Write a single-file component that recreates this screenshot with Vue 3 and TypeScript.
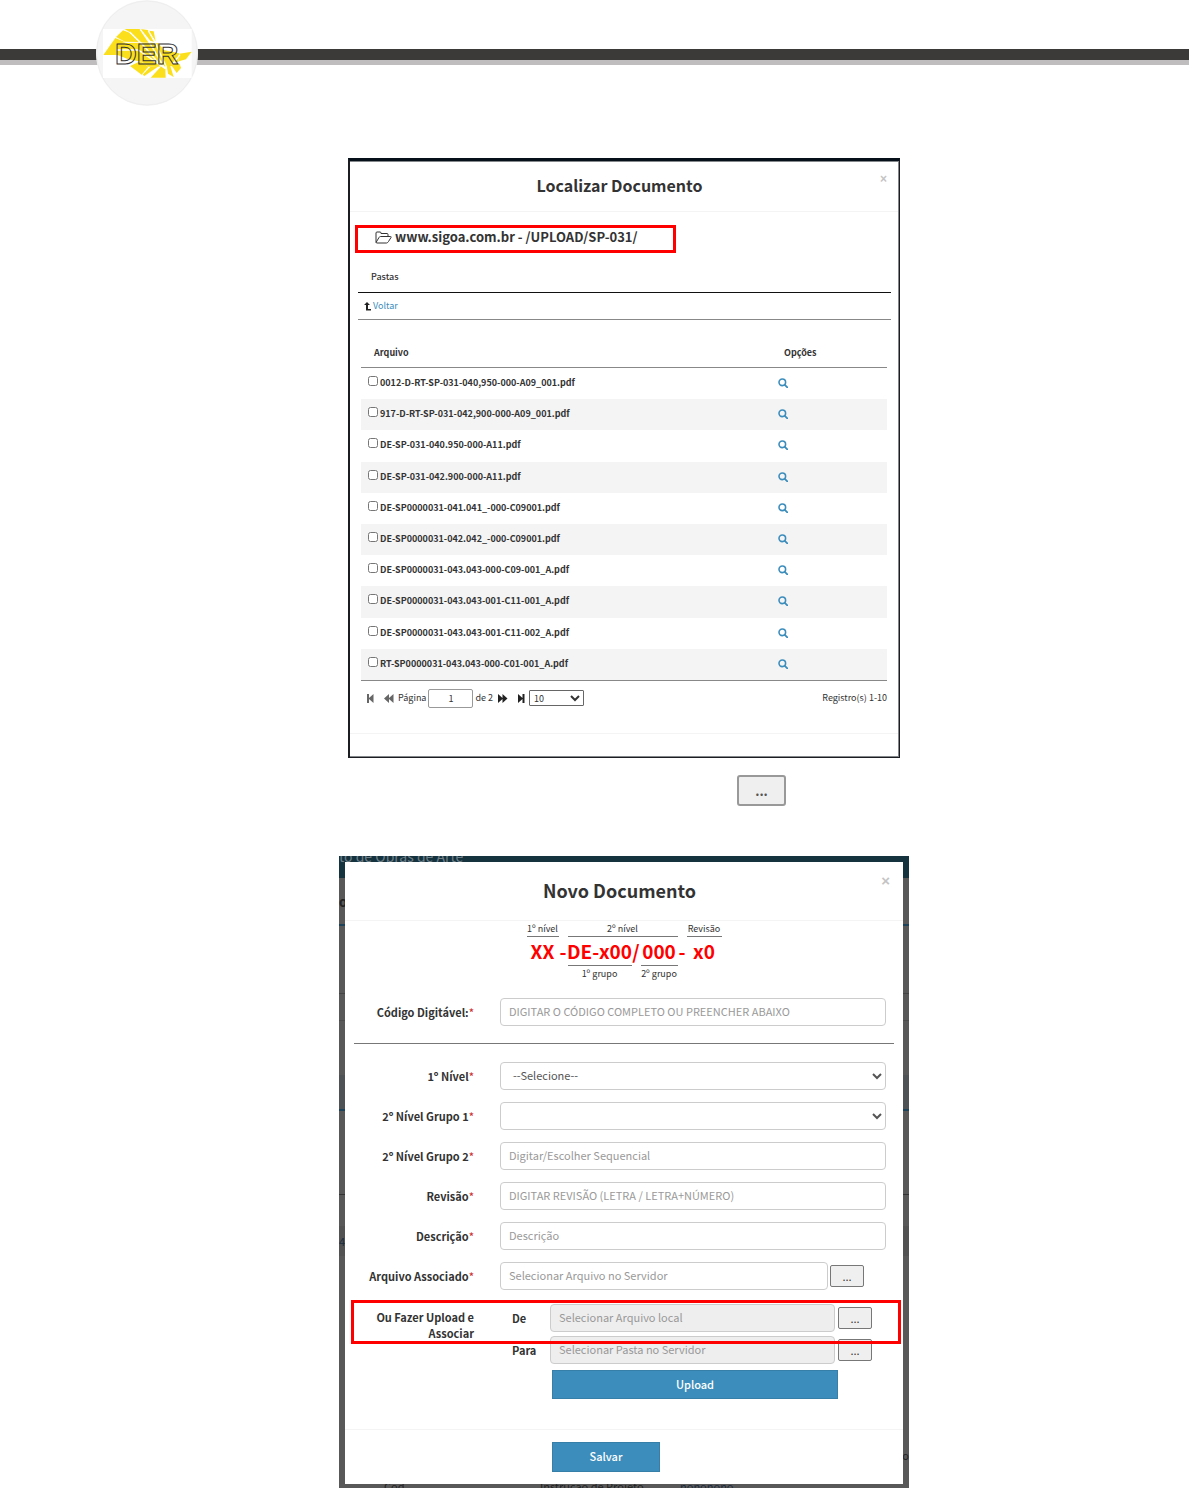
<script setup lang="ts">
import { ref } from 'vue'

interface Field {
  id: string
  label: string
  kind: 'select' | 'text' | 'file'
  hint: string
}

const files: string[] = [
  '0012-D-RT-SP-031-040,950-000-A09_001.pdf',
  '917-D-RT-SP-031-042,900-000-A09_001.pdf',
  'DE-SP-031-040.950-000-A11.pdf',
  'DE-SP-031-042.900-000-A11.pdf',
  'DE-SP0000031-041.041_-000-C09001.pdf',
  'DE-SP0000031-042.042_-000-C09001.pdf',
  'DE-SP0000031-043.043-000-C09-001_A.pdf',
  'DE-SP0000031-043.043-001-C11-001_A.pdf',
  'DE-SP0000031-043.043-001-C11-002_A.pdf',
  'RT-SP0000031-043.043-000-C01-001_A.pdf',
]

const fields: Field[] = [
  { id: 'nivel1', label: '1º Nível', kind: 'select', hint: '--Selecione--' },
  { id: 'nivel2g1', label: '2º Nível Grupo 1', kind: 'select', hint: '' },
  { id: 'nivel2g2', label: '2º Nível Grupo 2', kind: 'text', hint: 'Digitar/Escolher Sequencial' },
  { id: 'revisao', label: 'Revisão', kind: 'text', hint: 'DIGITAR REVISÃO (LETRA / LETRA+NÚMERO)' },
  { id: 'descricao', label: 'Descrição', kind: 'text', hint: 'Descrição' },
  { id: 'arquivo', label: 'Arquivo Associado', kind: 'file', hint: 'Selecionar Arquivo no Servidor' },
]

const selected = ref<string[]>([])
const page = ref('1')
</script>

<template>
  <div class="page">
    <header class="banner">
      <div class="stripe"></div>
      <svg class="logo" viewBox="0 0 312 318" role="img" aria-label="DER">
        <ellipse cx="156" cy="159" rx="153" ry="158" fill="#f5f5f5" />
        <ellipse cx="156" cy="159" rx="151" ry="156" fill="none" stroke="#eeeeee" stroke-width="3" />
        <rect x="24" y="87" width="266" height="147" fill="#fff" />
        <g fill="#fbdf1c">
          <path d="M25 165 61 114 92 127 68 131 68 165Z" />
          <path d="M63 111 84 91 104 98 132 126 90 125Z" />
          <path d="M88 87 134 87 164 128 134 127 108 98Z" />
          <path d="M137 87 158 90 181 127 166 122Z" />
          <path d="M161 92 176 94 182 124Z" />
          <path d="M68 129 146 128 190 129 206 150 252 160 250 198 160 200 140 185 100 178 68 165Z" />
          <path d="M253 161 290 155 273 178 252 184Z" />
          <path d="M105 198 136 184 160 200 140 224Z" />
          <path d="M166 200 192 198 148 228 143 224Z" />
          <path d="M167 233 200 197 211 207 212 233Z" />
          <path d="M215 197 226 198 236 231 219 221Z" />
          <path d="M229 196 254 192 258 204 245 219Z" />
        </g>
        <g stroke="#fff" stroke-width="4" fill="none">
          <path d="M104 96 144 135 198 198" />
          <path d="M136 88 168 135 206 200" />
          <path d="M160 92 184 135 214 200" />
          <path d="M66 150 130 150 210 205" />
          <path d="M255 164 234 190 270 184" />
        </g>
        <text x="155" y="193" text-anchor="middle" class="logo-text">DER</text>
      </svg>
    </header>

    <main class="content">
      <section class="shot-files">
        <div class="dialog">
          <div class="dialog-head">
            <h2>Localizar Documento</h2>
            <button type="button" class="close" aria-label="Fechar">×</button>
          </div>
          <div class="path">
            <svg width="17" height="13" viewBox="0 0 17 13" fill="none" stroke="#333" stroke-width="1" stroke-linejoin="round">
              <path d="M1 11V2Q1 1 2 1H5Q6 1 6 2V2.500H12Q13 2.500 13 3.500V5.500M1 11.500 4 6.500Q4.500 5.500 5.500 5.500H15.500Q16.500 5.500 16 6.500L13.500 10.500Q12.500 12 11.500 12H2Q1 12 1 11" />
            </svg>
            <span>www.sigoa.com.br - /UPLOAD/SP-031/</span>
          </div>
          <div class="folders">
            <div class="folders-head">Pastas</div>
            <div class="folders-row">
              <svg width="7" height="9" viewBox="0 0 7 9"><path d="M3 0 6 3H4V7H7V8.500H2V3H0Z" fill="#222" /></svg>
              <a href="#">Voltar</a>
            </div>
          </div>
          <table class="files">
            <thead>
              <tr><th>Arquivo</th><th class="opt">Opções</th></tr>
            </thead>
            <tbody>
              <tr v-for="(file, i) in files" :key="file">
                <td>
                  <span class="file">
                    <input :id="'file' + i" v-model="selected" type="checkbox" :value="file" />
                    <label :for="'file' + i">{{ file }}</label>
                  </span>
                </td>
                <td class="view">
                  <a href="#" aria-label="Visualizar">
                    <svg width="10" height="10" viewBox="0 0 10 10" fill="none" stroke="#3c8dbc">
                      <circle cx="4.300" cy="4.300" r="3.300" stroke-width="1.600" />
                      <path d="M6.800 6.800 9.300 9.300" stroke-width="1.800" stroke-linecap="round" />
                    </svg>
                  </a>
                </td>
              </tr>
            </tbody>
          </table>
          <div class="pager">
            <button type="button" class="nav off" aria-label="Primeira">
              <svg width="7" height="9" viewBox="0 0 7 9"><path d="M0 0H2V4L6.500 0V9L2 5V9H0Z" /></svg>
            </button>
            <button type="button" class="nav off" aria-label="Anterior">
              <svg width="10" height="9" viewBox="0 0 10 9"><path d="M5 0V4L9.500 0V9L5 5V9L0 4.500Z" /></svg>
            </button>
            <label for="page">Página</label>
            <input id="page" v-model="page" type="text" />
            <span class="total">de 2</span>
            <button type="button" class="nav" aria-label="Próxima">
              <svg width="10" height="9" viewBox="0 0 10 9"><path d="M0 0 4.500 4V0L9.500 4.500 4.500 9V5L0 9Z" /></svg>
            </button>
            <button type="button" class="nav" aria-label="Última">
              <svg width="7" height="9" viewBox="0 0 7 9"><path d="M0 0 4.500 4V0H6.500V9H4.500V5L0 9Z" /></svg>
            </button>
            <select aria-label="Registros por página"><option>10</option></select>
            <span class="count">Registro(s) 1-10</span>
          </div>
          <div class="dialog-foot"></div>
        </div>
      </section>

      <div class="inline-button">
        <button type="button" class="browse large">...</button>
      </div>

      <section class="shot-form">
        <div class="backdrop" aria-hidden="true">
          <div class="topbar">to de Obras de Arte</div>
          <div class="band title-band">os</div>
          <div class="band b1"></div>
          <div class="band b2"></div>
          <div class="band b3"></div>
          <div class="band b4"></div>
          <div class="band b5">4</div>
          <div class="band b6">o</div>
          <div class="under"><span>Cód</span><span>Instrução de Projeto</span><span class="blue">nononono</span></div>
        </div>
        <form class="modal" @submit.prevent>
          <div class="modal-head">
            <h2>Novo Documento</h2>
            <button type="button" class="close" aria-label="Fechar">×</button>
          </div>

          <div class="code">
            <span class="over c1">1º nível</span>
            <span class="over c35">2º nível</span>
            <span class="over c7">Revisão</span>
            <b>XX</b><b>-</b><b>DE-x00</b><b>/</b><b>000</b><b>-</b><b>x0</b>
            <span class="below c3">1º grupo</span>
            <span class="below c5">2º grupo</span>
          </div>

          <div class="row">
            <label for="codigo">Código Digitável:<i>*</i></label>
            <input id="codigo" type="text" placeholder="DIGITAR O CÓDIGO COMPLETO OU PREENCHER ABAIXO" />
          </div>
          <hr />
          <div class="rows">
            <div v-for="f in fields" :key="f.id" class="row">
              <label :for="f.id">{{ f.label }}<i>*</i></label>
              <select v-if="f.kind === 'select'" :id="f.id"><option>{{ f.hint }}</option></select>
              <input v-else-if="f.kind === 'text'" :id="f.id" type="text" :placeholder="f.hint" />
              <div v-else class="with-button">
                <input :id="f.id" type="text" :placeholder="f.hint" />
                <button type="button" class="browse">...</button>
              </div>
            </div>
          </div>

          <div class="upload">
            <div class="upload-label">Ou Fazer Upload e Associar</div>
            <div class="upload-fields">
              <div class="line">
                <label for="de">De</label>
                <input id="de" type="text" disabled placeholder="Selecionar Arquivo local" />
                <button type="button" class="browse">...</button>
              </div>
              <div class="line">
                <label for="para">Para</label>
                <input id="para" type="text" disabled placeholder="Selecionar Pasta no Servidor" />
                <button type="button" class="browse">...</button>
              </div>
              <button type="button" class="primary send">Upload</button>
            </div>
            <div class="marker"></div>
          </div>

          <div class="modal-foot">
            <button type="submit" class="primary save">Salvar</button>
          </div>
        </form>
      </section>
    </main>
  </div>
</template>

<style>
body {
  margin: 0;
  background: #fff;
}
</style>

<style scoped>
.page,
.page * {
  box-sizing: border-box;
}
.page {
  font-family: "Noto Sans CJK SC", "Noto Sans", sans-serif;
  color: #333;
  font-size: 9px;
  line-height: 16px;
}
button,
input,
select {
  font-family: inherit;
  font-size: inherit;
  color: inherit;
  margin: 0;
}
a {
  color: #3c8dbc;
  text-decoration: none;
}
h2 {
  margin: 0;
  padding: 0 9px 2px 0;
}

.banner {
  position: relative;
  height: 158px;
  padding-top: 49px;
}
.stripe {
  height: 16px;
  background: #3b3a39;
  border-bottom: 5px solid #bfbdbe;
}
.logo {
  position: absolute;
  left: 95px;
  top: 0;
  width: 104px;
  height: 106px;
}
.logo-text {
  font: bold 90px "Liberation Sans", sans-serif;
  fill: none;
  stroke: #333;
  stroke-width: 3px;
}

.content {
  padding-left: 59px;
  display: flex;
  flex-direction: column;
  align-items: center;
}

.shot-files {
  width: 100%;
  max-width: 552px;
  border: solid #1b1d22;
  border-width: 3px 1px 1px 2px;
  border-top-color: #06101a;
}
.dialog {
  border: solid #85888b;
  border-width: 1px 1px 1px 0;
}
.dialog-head,
.modal-head {
  position: relative;
  border-bottom: 1px solid #f4f4f4;
  text-align: center;
}
.dialog-head h2 {
  font-size: 16px;
  line-height: 47px;
}
.close {
  position: absolute;
  right: 11px;
  top: 9px;
  padding: 0;
  border: 0;
  background: none;
  color: #c4c4c4;
  font-family: "Liberation Sans", sans-serif;
  font-weight: bold;
  font-size: 12px;
  line-height: 16px;
}
.path {
  display: flex;
  align-items: center;
  gap: 3px;
  width: 321px;
  height: 28px;
  margin: 13px 0 0 5px;
  padding: 0 0 4px 17px;
  border: 3px solid #f00;
  font-size: 13px;
  font-weight: bold;
  line-height: 18px;
  white-space: nowrap;
}
.folders {
  margin: 9px 7px 0 8px;
}
.folders-head {
  padding-left: 13px;
  line-height: 30px;
  font-weight: 500;
  border-bottom: 1px solid #111;
}
.folders-row {
  display: flex;
  align-items: center;
  gap: 2px;
  padding-left: 6px;
  line-height: 26px;
  border-bottom: 1px solid #888;
}
.files {
  width: calc(100% - 22px);
  height: 343px;
  margin: 18px 11px 0;
  border-collapse: separate;
  border-spacing: 0;
  border-bottom: 1px solid #888;
  font-weight: bold;
}
.files th {
  height: 30px;
  padding: 0 0 0 13px;
  text-align: left;
  border-bottom: 1px solid #888;
}
.files th.opt {
  width: 110px;
  padding-left: 7px;
}
.files td {
  height: 31px;
  padding: 0 0 1px 7px;
}
.files td.view {
  padding: 0 0 1px 1px;
}
.files tbody tr:nth-child(even) {
  background: #f4f4f4;
}
.view svg {
  display: block;
}
.file {
  display: flex;
  align-items: center;
  gap: 2px;
  line-height: 16px;
}
.file input {
  width: 10px;
  height: 10px;
  margin-bottom: 4px;
}
.pager {
  display: flex;
  align-items: center;
  height: 52px;
  padding: 0 11px 18px 17px;
}
.nav {
  display: flex;
  padding: 0;
  border: 0;
  background: none;
  margin-right: 10px;
  fill: #222;
}
.nav.off {
  fill: #666;
}
.nav + label {
  margin-left: -6px;
}
.pager input {
  width: 45px;
  height: 19px;
  margin: 0 2px;
  padding: 0;
  border: 1px solid #999;
  border-radius: 2px;
  text-align: center;
}
.total {
  margin-right: 5px;
}
.pager select {
  width: 55px;
  height: 16px;
  margin-left: -6px;
  padding: 0;
  border: 1px solid #666;
  border-radius: 1px;
  background: #fff;
}
.count {
  margin-left: auto;
}
.dialog-foot {
  height: 23px;
  border-top: 1px solid #f4f4f4;
}

.inline-button {
  width: 100%;
  max-width: 552px;
  padding: 17px 114px 50px 0;
  display: flex;
  justify-content: flex-end;
}
.browse {
  flex: none;
  width: 34px;
  height: 22px;
  padding: 0;
  border: 1px solid #777;
  border-radius: 2px;
  background: #efefef;
  font-size: 11px;
  line-height: 16px;
}
.browse.large {
  width: 49px;
  height: 31px;
  border: 2px solid #999;
  border-radius: 3px;
  font-size: 13px;
  font-weight: bold;
  color: #555;
}

.shot-form {
  position: relative;
  width: 100%;
  max-width: 570px;
  padding: 6px 6px 4px;
  overflow: hidden;
}
.backdrop {
  position: absolute;
  inset: 0;
  background: #585858;
}
.topbar {
  height: 22px;
  background: #15323f;
  color: #6e7f87;
  font-size: 14px;
  line-height: 0;
  overflow: hidden;
}
.band {
  position: absolute;
  left: 0;
  right: 0;
  font-size: 13px;
  line-height: 16px;
  color: #222;
}
.title-band {
  top: 38px;
  height: 32px;
  border-bottom: 2px solid #1c435a;
  font-weight: bold;
}
.b1 {
  top: 137px;
  border-top: 1px solid #444;
}
.b2 {
  top: 164px;
  border-top: 1px solid #4c4c4c;
}
.b3 {
  top: 219px;
  height: 36px;
  background: #4e5254;
  border-bottom: 2px solid #1c435a;
}
.b4 {
  top: 338px;
  border-top: 1px solid #333;
}
.b5 {
  top: 370px;
  height: 30px;
  padding-top: 7px;
  background: #525252;
  font-size: 11px;
  color: #1b2a3c;
}
.b6 {
  top: 591px;
  text-align: right;
  font-size: 11px;
}
.under {
  position: absolute;
  left: 45px;
  bottom: -6px;
  display: grid;
  grid-template-columns: 156px 140px auto;
  font-size: 11px;
  line-height: 16px;
  color: #222;
}
.under .blue {
  color: #1b2a3c;
}
.modal {
  position: relative;
  background: #fff;
}
.modal-head h2 {
  font-size: 18px;
  line-height: 56px;
}
.modal-head .close {
  right: 13px;
  top: 11px;
  font-size: 15px;
}
.code {
  display: grid;
  grid-template-columns: 32px 9px 64px 9px 37px 9px 35px;
  justify-content: center;
  text-align: center;
  white-space: nowrap;
}
.over {
  grid-row: 1;
  line-height: 15px;
  border-bottom: 1px solid #777;
}
.below {
  grid-row: 3;
  line-height: 16px;
  border-top: 1px solid #777;
}
.c1 { grid-column: 1; }
.c3 { grid-column: 3; }
.c35 { grid-column: 3 / 6; }
.c5 { grid-column: 5; }
.c7 { grid-column: 7; }
.code b {
  grid-row: 2;
  display: flex;
  justify-content: center;
  color: #f00;
  font-size: 19px;
  line-height: 28px;
}
.row {
  display: grid;
  grid-template-columns: 129px 1fr;
  gap: 26px;
  align-items: center;
  padding-right: 17px;
  font-size: 11px;
}
.row > label,
.upload-label {
  text-align: right;
  font-weight: bold;
}
.row i {
  font-style: normal;
  font-weight: 500;
  color: #c33;
}
.code + .row {
  margin-top: 16px;
}
.row input,
.row select,
.line input {
  width: 100%;
  min-width: 0;
  height: 28px;
  padding: 0 8px 2px;
  border: 1px solid #ccc;
  border-radius: 4px;
  background: #fff;
  color: #555;
}
.modal input::placeholder {
  color: #999;
  opacity: 1;
}
hr {
  margin: 17px 9px 18px;
  border: 0;
  border-top: 1px solid #777;
}
.rows {
  display: grid;
  gap: 12px;
}
.with-button {
  display: flex;
  align-items: center;
  gap: 2px;
  padding-right: 22px;
}
.upload {
  position: relative;
  display: grid;
  grid-template-columns: 129px 1fr;
  gap: 38px;
  margin-top: 14px;
  padding-right: 31px;
  font-size: 11px;
}
.upload-label {
  padding: 5px 0 0 20px;
}
.upload-fields {
  display: grid;
  gap: 4px;
}
.line {
  display: grid;
  grid-template-columns: 38px 1fr 34px;
  align-items: center;
}
.line label {
  font-weight: bold;
}
.line input {
  width: calc(100% - 3px);
  background: #eee;
}
.primary {
  padding: 0 0 2px;
  border: 1px solid #367fa9;
  background: #3c8dbc;
  color: #fff;
  font-size: 11px;
  font-weight: 500;
  height: 29px;
}
.send {
  margin: 2px 34px 0 40px;
}
.marker {
  position: absolute;
  left: 6px;
  right: 2px;
  top: -4px;
  height: 44px;
  border: 3px solid #f00;
  pointer-events: none;
}
.modal-foot {
  margin-top: 30px;
  padding: 12px 0 12px 207px;
  border-top: 1px solid #f4f4f4;
}
.save {
  display: block;
  width: 108px;
  height: 30px;
}
</style>
